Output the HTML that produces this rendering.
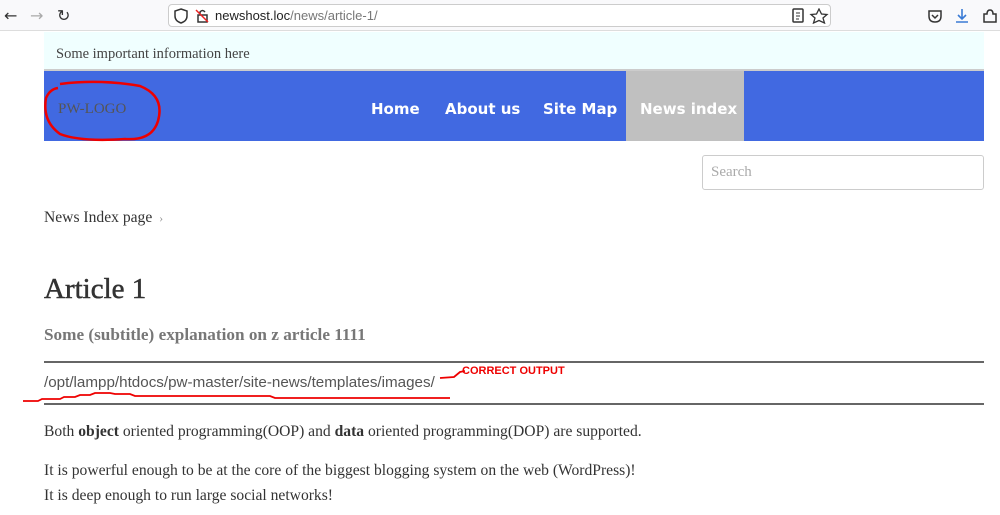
<!DOCTYPE html>
<html><head><meta charset="utf-8"><style>
*{margin:0;padding:0;box-sizing:border-box}
body{width:1000px;height:515px;overflow:hidden;background:#fff;font-family:"Liberation Serif",serif;color:#333;position:relative}
.abs{position:absolute}
.chrome{left:0;top:0;width:1000px;height:31px;background:#f9f9fb;border-bottom:1px solid #ddd}
.url{left:168px;top:4px;width:663px;height:23px;background:#fff;border:1px solid #ccc;border-radius:4px;font-family:"Liberation Sans",sans-serif;font-size:13px;line-height:21px;padding-left:46px;color:#222}
.url span{color:#777}
.info{left:44px;top:32px;width:940px;height:39px;background:#f0ffff;border-bottom:2px solid #ccc;font-size:14.5px;line-height:44px;padding-left:12px;color:#444}
.nav{left:44px;top:71px;width:940px;height:70px;background:#4169e1}
.nav a{position:absolute;top:0;height:70px;line-height:76px;color:#fff;font-family:"DejaVu Sans",sans-serif;font-weight:bold;font-size:15px;text-decoration:none}
.logo{left:58px;top:101px;font-size:15px;color:#555}
.search{left:702px;top:155px;width:282px;height:35px;border:1px solid #ccc;border-radius:3px;font-size:15px;color:#aaa;padding-left:8px;line-height:33px}
.txt{font-size:15.6px;color:#333}
hr{position:absolute;left:44px;width:940px;border:0;border-top:2px solid #666}
</style></head><body>
<div class="abs chrome"></div>
<div class="abs" style="left:4px;top:6px;font:16px 'DejaVu Sans';color:#333">←</div>
<div class="abs" style="left:30px;top:6px;font:16px 'DejaVu Sans';color:#aaa">→</div>
<div class="abs" style="left:57px;top:6px;font:16px 'DejaVu Sans';color:#333">↻</div>
<div class="abs url">newshost.loc<span>/news/article-1/</span></div>
<svg class="abs" style="left:174px;top:8px" width="36" height="16"><path d="M7 1 L13 3 V8 Q13 13 7 15 Q1 13 1 8 V3Z" fill="none" stroke="#333" stroke-width="1.5"/><rect x="24" y="7" width="9" height="7" fill="none" stroke="#333" stroke-width="1.5"/><path d="M26 7 V4 Q28.5 1 31 4" fill="none" stroke="#333" stroke-width="1.5"/><path d="M22 2 L34 14" stroke="#e22" stroke-width="1.5"/></svg>
<svg class="abs" style="left:790px;top:8px" width="40" height="16"><rect x="3" y="1" width="10" height="13" rx="1" fill="none" stroke="#333" stroke-width="1.5"/><path d="M6 5h4M6 8h4M6 11h3" stroke="#333"/><path d="M29 1 L31.5 6 L37 6.5 L33 10 L34.5 15 L29 12.5 L23.5 15 L25 10 L21 6.5 L26.5 6Z" fill="none" stroke="#333" stroke-width="1.3"/></svg>
<svg class="abs" style="left:926px;top:7px" width="72" height="18"><path d="M3 4 H15 V9 Q15 15 9 15 Q3 15 3 9Z" fill="none" stroke="#333" stroke-width="1.5"/><path d="M6 8 L9 11 L12 8" fill="none" stroke="#333" stroke-width="1.5"/><path d="M36 2 V12 M32 8 L36 12 L40 8 M30 15 H42" fill="none" stroke="#3a7bd5" stroke-width="1.6"/><path d="M58 15 V7 H61 Q61 3 64 3 Q67 3 67 7 H70 V15Z" fill="none" stroke="#333" stroke-width="1.5"/></svg>
<div class="abs info">Some important information here</div>
<div class="abs nav">
<a style="left:327px">Home</a>
<a style="left:401px">About us</a>
<a style="left:499px">Site Map</a>
<a style="left:582px;width:118px;background:#c0c0c0;padding-left:14px">News index</a>
</div>
<div class="abs logo">PW-LOGO</div>
<svg class="abs" style="left:40px;top:76px" width="130" height="68"><path d="M20 8 Q60 3 100 10 Q125 20 118 45 Q112 65 85 63 Q40 66 20 58 Q2 45 6 22 Q10 13 18 12" fill="none" stroke="#e00" stroke-width="2.5"/></svg>
<div class="abs search">Search</div>
<div class="abs txt" style="left:44px;top:209px">News Index page <span style="color:#999;font-size:12px">&nbsp;›</span></div>
<div class="abs" style="left:44px;top:273px;font-size:29px;color:#333;-webkit-text-stroke:0.5px #333">Article 1</div>
<div class="abs" style="left:44px;top:325px;font-size:17.2px;font-weight:bold;color:#777">Some (subtitle) explanation on z article 1111</div>
<hr style="top:361px">
<div class="abs" style="left:44px;top:374px;font-family:'Liberation Sans',sans-serif;font-size:15.2px;color:#555">/opt/lampp/htdocs/pw-master/site-news/templates/images/</div>
<div class="abs" style="left:462px;top:365px;font:bold 11px 'Liberation Sans',sans-serif;color:#e00">CORRECT OUTPUT</div>
<svg class="abs" style="left:20px;top:366px" width="445" height="40"><path d="M3 35 H18 L22 33 H40 L44 31 H55 L60 29 H70 L75 27 H90 L95 28 H110 L115 30 H250 L255 32 H430 M420 12 L434 11 L440 6 L445 5" fill="none" stroke="#e00" stroke-width="1.8"/></svg>
<hr style="top:403px">
<div class="abs txt" style="left:44px;top:423px">Both <b>object</b> oriented programming(OOP) and <b>data</b> oriented programming(DOP) are supported.</div>
<div class="abs txt" style="left:44px;top:462px">It is powerful enough to be at the core of the biggest blogging system on the web (WordPress)!</div>
<div class="abs txt" style="left:44px;top:487px">It is deep enough to run large social networks!</div>
</body></html>
